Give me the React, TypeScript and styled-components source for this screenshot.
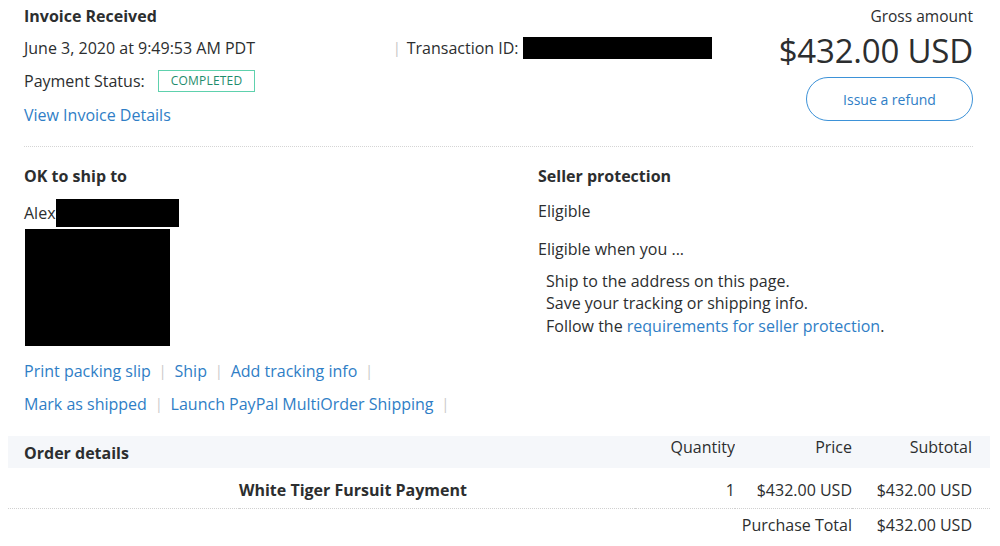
import styled, { createGlobalStyle } from "styled-components";

const GlobalStyle = createGlobalStyle`
  body {
    margin: 0;
    background: #fff;
    font-family: "Open Sans", "Noto Sans", sans-serif;
    color: #2c2e2f;
    font-size: 16px;
  }
`;

const Page = styled.div`
  width: 982px;
  padding: 0 0 0 8px;
`;

const Section = styled.section`
  padding: 0 17px 0 16px;
`;

const Top = styled.section`
  display: flex;
  justify-content: space-between;
  padding-top: 5px;
  padding-bottom: 14px;
  border-bottom: 1px dotted #d5d5d5;
  margin: 0 17px 0 16px;
`;

const Line = styled.div`
  display: flex;
  align-items: center;
  height: 33.5px;
`;

const Title = styled.h2`
  margin: 0;
  font-size: 16px;
  font-weight: 700;
  line-height: 22px;
  height: 24px;
`;

const DateCell = styled.span`
  width: 369px;
`;

const Sep = styled.span`
  color: #c2c2c2;
  margin: 0 6px 0 0;
  font-size: 14px;
`;

const Redact = styled.span<{ $w: number; $h: number }>`
  display: inline-block;
  width: ${p => p.$w}px;
  height: ${p => p.$h}px;
  background: #000;
`;

const Badge = styled.span`
  margin-left: 13px;
  border: 1px solid #5ed1ad;
  color: #1f8c6c;
  font-size: 12px;
  letter-spacing: 0.2px;
  padding: 1px 12px;
  line-height: 18px;
`;

const Link = styled.a`
  color: #2f7ec6;
  text-decoration: none;
  cursor: pointer;
`;

const Right = styled.div`
  display: flex;
  flex-direction: column;
  align-items: flex-end;
`;

const Gross = styled.div`
  font-size: 15.5px;
  line-height: 22px;
  height: 24px;
`;

const Amount = styled.div`
  font-size: 33px;
  line-height: 44px;
  letter-spacing: -0.2px;
`;

const RefundBtn = styled.button`
  margin-top: 4px;
  width: 167px;
  height: 44px;
  border: 1px solid #3d92d8;
  border-radius: 22px;
  background: #fff;
  color: #2f7ec6;
  font-family: inherit;
  font-size: 14px;
`;

const Details = styled(Section)`
  display: grid;
  grid-template-columns: 514px 1fr;
  padding-top: 17px;
  height: 272px;
`;

const Col = styled.div`
  display: flex;
  flex-direction: column;
`;

const Heading = styled.h3`
  margin: 0 0 13px;
  font-size: 16px;
  font-weight: 700;
  line-height: 24px;
`;

const Name = styled.div`
  display: flex;
  align-items: center;
  height: 28px;
  margin-top: -2px;
`;

const Address = styled.div`
  margin-top: 2px;
  margin-left: 1px;
`;

const Actions = styled.div`
  margin-top: 9px;
  display: flex;
  flex-direction: column;
  gap: 11px;
  line-height: 22px;
`;

const ActionRow = styled.div`
  display: flex;
  align-items: center;
  gap: 8px;
`;

const Pipe = styled.span`
  color: #c8c8c8;
  font-size: 14px;
`;

const Plain = styled.div<{ $mt?: number }>`
  line-height: 22px;
  margin-top: ${p => p.$mt ?? 0}px;
`;

const Bullets = styled.ul`
  list-style: none;
  margin: 10px 0 0 8px;
  padding: 0;
  li {
    line-height: 22.5px;
  }
`;

const Table = styled.div`
  display: grid;
  grid-template-columns: 231px 1fr 100px 117px 138px;
`;

const HeadRow = styled.div`
  display: contents;
  & > * {
    background: #f5f7fa;
    height: 32px;
    box-sizing: border-box;
  }
`;

const HeadCell = styled.div<{ $last?: boolean }>`
  text-align: right;
  padding-top: 1px;
  line-height: 20px;
  padding-right: ${p => (p.$last ? "18px" : "0")};
`;

const OrderTitle = styled.div`
  grid-column: span 2;
  padding: 3px 0 0 16px;
  font-weight: 700;
  line-height: 28px;
`;

const Cell = styled.div<{ $bold?: boolean; $left?: boolean; $last?: boolean }>`
  text-align: ${p => (p.$left ? "left" : "right")};
  font-weight: ${p => (p.$bold ? 700 : 400)};
  padding-top: 11px;
  height: 29px;
  line-height: 22px;
  padding-right: ${p => (p.$last ? "18px" : "0")};
  border-bottom: 1px dotted #d0d0d0;
`;

const TotalLabel = styled.div`
  grid-column: 1 / span 4;
  text-align: right;
  line-height: 32px;
`;

const TotalValue = styled.div`
  text-align: right;
  padding-right: 18px;
  line-height: 32px;
`;

export default function App() {
  return (
    <Page>
      <GlobalStyle />
      <Top>
        <div>
          <Title>Invoice Received</Title>
          <Line style={{ marginTop: 2 }}>
            <DateCell>June 3, 2020 at 9:49:53 AM PDT</DateCell>
            <Sep>|</Sep>
            <span>Transaction ID:&nbsp;</span>
            <Redact $w={189} $h={22} />
          </Line>
          <Line>
            Payment Status: <Badge>COMPLETED</Badge>
          </Line>
          <Line>
            <Link>View Invoice Details</Link>
          </Line>
        </div>
        <Right>
          <Gross>Gross amount</Gross>
          <Amount>$432.00 USD</Amount>
          <RefundBtn>Issue a refund</RefundBtn>
        </Right>
      </Top>

      <Details>
        <Col>
          <Heading>OK to ship to</Heading>
          <Name>
            Alex<Redact $w={123} $h={28} />
          </Name>
          <Address>
            <Redact $w={145} $h={117} />
          </Address>
          <Actions>
            <ActionRow>
              <Link>Print packing slip</Link>
              <Pipe>|</Pipe>
              <Link>Ship</Link>
              <Pipe>|</Pipe>
              <Link>Add tracking info</Link>
              <Pipe>|</Pipe>
            </ActionRow>
            <ActionRow>
              <Link>Mark as shipped</Link>
              <Pipe>|</Pipe>
              <Link>Launch PayPal MultiOrder Shipping</Link>
              <Pipe>|</Pipe>
            </ActionRow>
          </Actions>
        </Col>
        <Col>
          <Heading>Seller protection</Heading>
          <Plain $mt={-1}>Eligible</Plain>
          <Plain $mt={16}>Eligible when you ...</Plain>
          <Bullets>
            <li>Ship to the address on this page.</li>
            <li>Save your tracking or shipping info.</li>
            <li>
              Follow the <Link>requirements for seller protection</Link>.
            </li>
          </Bullets>
        </Col>
      </Details>

      <Table>
        <HeadRow>
          <OrderTitle>Order details</OrderTitle>
          <HeadCell>Quantity</HeadCell>
          <HeadCell>Price</HeadCell>
          <HeadCell $last>Subtotal</HeadCell>
        </HeadRow>
        <Cell />
        <Cell $left $bold>White Tiger Fursuit Payment</Cell>
        <Cell>1</Cell>
        <Cell>$432.00 USD</Cell>
        <Cell $last>$432.00 USD</Cell>
        <TotalLabel>Purchase Total</TotalLabel>
        <TotalValue>$432.00 USD</TotalValue>
      </Table>
    </Page>
  );
}
